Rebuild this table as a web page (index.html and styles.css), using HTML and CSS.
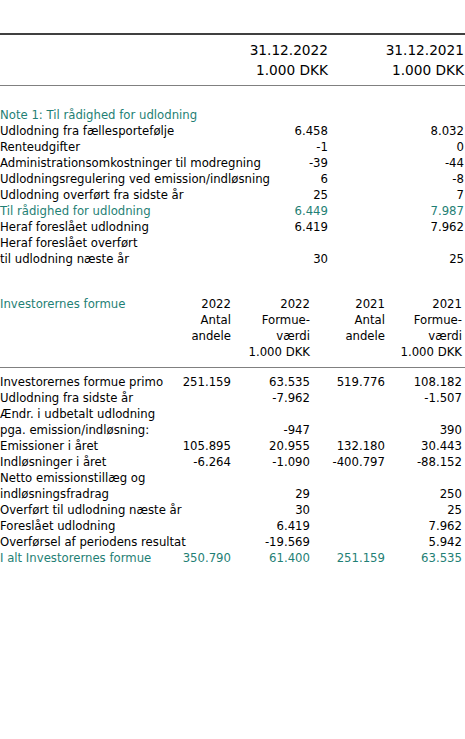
FILE: index.html
```html
<!DOCTYPE html>
<html lang="da">
<head>
    <meta charset="UTF-8">
    <meta name="viewport" content="width=device-width, initial-scale=1.0">
    <title>Udlodning og investorernes formue</title>
    <link rel="stylesheet" href="styles.css">
</head>
<body>
    <table class="note">
        <colgroup>
            <col>
            <col class="col-a">
            <col class="col-b">
        </colgroup>
        <thead>
            <tr>
                <th></th>
                <th>31.12.2022<br>1.000 DKK</th>
                <th>31.12.2021<br>1.000 DKK</th>
            </tr>
        </thead>
        <tbody>
            <tr class="accent"><td>Note 1: Til rådighed for udlodning</td><td></td><td></td></tr>
            <tr><td>Udlodning fra fællesportefølje</td><td>6.458</td><td>8.032</td></tr>
            <tr><td>Renteudgifter</td><td>-1</td><td>0</td></tr>
            <tr><td>Administrationsomkostninger til modregning</td><td>-39</td><td>-44</td></tr>
            <tr><td>Udlodningsregulering ved emission/indløsning</td><td>6</td><td>-8</td></tr>
            <tr><td>Udlodning overført fra sidste år</td><td>25</td><td>7</td></tr>
            <tr class="accent"><td>Til rådighed for udlodning</td><td>6.449</td><td>7.987</td></tr>
            <tr><td>Heraf foreslået udlodning</td><td>6.419</td><td>7.962</td></tr>
            <tr><td>Heraf foreslået overført</td><td></td><td></td></tr>
            <tr><td>til udlodning næste år</td><td>30</td><td>25</td></tr>
        </tbody>
    </table>

    <table class="equity">
        <colgroup>
            <col>
            <col class="col-1">
            <col class="col-2">
            <col class="col-3">
            <col class="col-4">
        </colgroup>
        <thead>
            <tr>
                <th class="title">Investorernes formue</th>
                <th>2022<br>Antal<br>andele</th>
                <th>2022<br>Formue-<br>værdi<br>1.000 DKK</th>
                <th>2021<br>Antal<br>andele</th>
                <th>2021<br>Formue-<br>værdi<br>1.000 DKK</th>
            </tr>
        </thead>
        <tbody>
            <tr><td>Investorernes formue primo</td><td>251.159</td><td>63.535</td><td>519.776</td><td>108.182</td></tr>
            <tr><td>Udlodning fra sidste år</td><td></td><td>-7.962</td><td></td><td>-1.507</td></tr>
            <tr><td>Ændr. i udbetalt udlodning</td><td></td><td></td><td></td><td></td></tr>
            <tr><td>pga. emission/indløsning:</td><td></td><td>-947</td><td></td><td>390</td></tr>
            <tr><td>Emissioner i året</td><td>105.895</td><td>20.955</td><td>132.180</td><td>30.443</td></tr>
            <tr><td>Indløsninger i året</td><td>-6.264</td><td>-1.090</td><td>-400.797</td><td>-88.152</td></tr>
            <tr><td>Netto emissionstillæg og</td><td></td><td></td><td></td><td></td></tr>
            <tr><td>indløsningsfradrag</td><td></td><td>29</td><td></td><td>250</td></tr>
            <tr><td>Overført til udlodning næste år</td><td></td><td>30</td><td></td><td>25</td></tr>
            <tr><td>Foreslået udlodning</td><td></td><td>6.419</td><td></td><td>7.962</td></tr>
            <tr><td>Overførsel af periodens resultat</td><td></td><td>-19.569</td><td></td><td>5.942</td></tr>
            <tr class="accent"><td>I alt Investorernes formue</td><td>350.790</td><td>61.400</td><td>251.159</td><td>63.535</td></tr>
        </tbody>
    </table>
</body>
</html>
```

FILE: styles.css
```css
body {
    font-family: "DejaVu Sans", sans-serif;
    font-size: 11.7px;
    color: #000000;
    background-color: #ffffff;
    margin: 0;
}

table {
    width: 100%;
    table-layout: fixed;
    border-collapse: collapse;
}

th, td {
    padding: 0;
    font-weight: normal;
    white-space: nowrap;
    text-align: right;
    line-height: 16px;
}

th:first-child, td:first-child {
    text-align: left;
    overflow: visible;
}

.accent td, .title {
    color: #1f7f75;
}

/* Note 1 */
.note {
    margin-top: 33px;
    border-top: 2px solid #404040;
}

.note .col-a {
    width: 90px;
}

.note .col-b {
    width: 137px;
}

.note thead th {
    font-size: 13.7px;
    line-height: 20px;
    padding-top: 5px;
    padding-bottom: 5px;
    border-bottom: 1px solid #808080;
}

.note thead th:last-child {
    padding-right: 1px;
}

.note tbody tr:first-child td {
    padding-top: 21px;
}

.note td:last-child {
    padding-right: 1px;
}

/* Investorernes formue */
.equity {
    margin-top: 29px;
}

.equity .col-1 {
    width: 71px;
}

.equity .col-2 {
    width: 79px;
}

.equity .col-3 {
    width: 75px;
}

.equity .col-4 {
    width: 80px;
}

.equity thead th {
    vertical-align: top;
    padding-bottom: 7px;
    border-bottom: 1px solid #808080;
}

.equity th:last-child, .equity td:last-child {
    padding-right: 3px;
}

.equity tbody tr:first-child td {
    padding-top: 6px;
}
```
